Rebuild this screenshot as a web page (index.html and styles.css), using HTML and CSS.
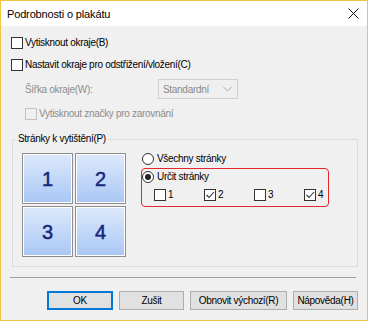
FILE: index.html
```html
<!DOCTYPE html>
<html lang="cs">
  <head>
    <meta charset="UTF-8" />
    <title>Podrobnosti o plakátu</title>
    <link rel="stylesheet" href="styles.css">
  </head>
  <body>
    <div class="window">
      <div class="titlebar">
        <span class="title">Podrobnosti o plakátu</span>
        <svg class="close" width="11" height="11" viewBox="0 0 11 11">
          <path d="M0.5 0.5 L10.5 10.5 M10.5 0.5 L0.5 10.5" stroke="#111" stroke-width="1" fill="none" />
        </svg>
      </div>

      <div class="content">
        <label class="check first"><span class="box"></span>Vytisknout okraje(B)</label>
        <label class="check second"><span class="box"></span>Nastavit okraje pro odstřižení/vložení(C)</label>

        <div class="width-row">
          <span class="width-label">Šířka okraje(W):</span>
          <div class="combo">
            <span>Standardní</span>
            <svg width="9" height="6" viewBox="0 0 9 6">
              <path d="M0.5 1 L4.5 5 L8.5 1" stroke="#a8a8a8" stroke-width="1" fill="none" />
            </svg>
          </div>
        </div>

        <label class="check disabled"><span class="box"></span>Vytisknout značky pro zarovnání</label>

        <fieldset class="group">
          <legend>Stránky k vytištění(P)</legend>
          <div class="group-body">
            <div class="tiles">
              <div class="tile">1</div>
              <div class="tile">2</div>
              <div class="tile">3</div>
              <div class="tile">4</div>
            </div>

            <div class="options">
              <label class="radio all"><span class="dot"></span>Všechny stránky</label>
              <div class="highlight">
                <label class="radio picked"><span class="dot on"></span>Určit stránky</label>
                <div class="pages">
                  <label class="check"><span class="box"></span>1</label>
                  <label class="check"><span class="box checked"></span>2</label>
                  <label class="check"><span class="box"></span>3</label>
                  <label class="check"><span class="box checked"></span>4</label>
                </div>
              </div>
            </div>
          </div>
        </fieldset>

        <div class="separator"></div>

        <div class="buttons">
          <button class="btn default">OK</button>
          <button class="btn">Zušit</button>
          <button class="btn wide">Obnovit výchozí(R)</button>
          <button class="btn">Nápověda(H)</button>
        </div>
      </div>
    </div>
  </body>
</html>
```

FILE: styles.css
```css
* {
  margin: 0;
  padding: 0;
  box-sizing: border-box;
}

body {
  font-family: "Liberation Sans", Arial, sans-serif;
  font-size: 10px;
  letter-spacing: -0.3px;
  color: #000;
  background: #fff;
}

.window {
  width: 368px;
  height: 321px;
  border: 1px solid #f1c544;
  display: flex;
  flex-direction: column;
  background: #f0f0f0;
}

.titlebar {
  height: 25px;
  background: #fff;
  display: flex;
  align-items: center;
  justify-content: space-between;
  padding: 0 8px 0 6px;
}

.title {
  font-size: 11px;
  letter-spacing: -0.15px;
}

.content {
  flex: 1;
  display: flex;
  flex-direction: column;
  padding: 11px 9px 0 10px;
}

/* checkboxes */

.check {
  display: flex;
  align-items: center;
  height: 12px;
  gap: 2px;
  line-height: 12px;
}

.box {
  width: 12px;
  height: 12px;
  border: 1px solid #333;
  background: #fff;
  flex: none;
}

.box.checked {
  background: #fff url("data:image/svg+xml,%3Csvg xmlns='http://www.w3.org/2000/svg' width='10' height='10'%3E%3Cpath d='M1.5 5 L4 7.5 L9 2' stroke='%23333' stroke-width='1.1' fill='none'/%3E%3C/svg%3E") center no-repeat;
}

.second {
  margin-top: 10px;
}

.width-row {
  display: flex;
  align-items: center;
  height: 20px;
  margin: 8px 0 0 14px;
  color: #8d8d8d;
}

.width-label {
  width: 133px;
}

.combo {
  width: 80px;
  height: 20px;
  border: 1px solid #cfcfcf;
  background: #efefef;
  display: flex;
  align-items: center;
  justify-content: space-between;
  padding: 0 5px 0 4px;
  color: #8a8a8a;
}

.disabled {
  margin: 9px 0 0 14px;
  color: #8d8d8d;
}

.disabled .box {
  border-color: #c2c2c2;
  background: #f0f0f0;
}

/* page group */

.group {
  margin: 13px 0 0 1px;
  width: 346px;
  height: 134px;
  border: 1px solid #dcdcdc;
  padding: 0;
}

.group legend {
  margin-left: 3px;
  padding: 0 2px;
  line-height: 12px;
}

.group-body {
  display: flex;
  padding: 8px 0 0 9px;
}

.tiles {
  display: grid;
  grid-template-columns: 51px 51px;
  grid-auto-rows: 51px;
  gap: 2px;
}

.tile {
  border: 1px solid #8e8e8e;
  box-shadow: inset 0 0 0 1px #fff;
  background: linear-gradient(#dde9fb, #a9c7f5);
  display: flex;
  align-items: center;
  justify-content: center;
  font-size: 20px;
  letter-spacing: 0;
  color: #16277a;
  -webkit-text-stroke: 0.5px #16277a;
  padding-top: 1px;
}

.options {
  margin-left: 15px;
}

.radio {
  display: flex;
  align-items: center;
  height: 12px;
  gap: 3px;
  line-height: 12px;
}

.radio.all {
  margin-left: 1px;
}

.dot {
  width: 12px;
  height: 12px;
  border-radius: 50%;
  border: 1px solid #333;
  background: #fff;
  flex: none;
  display: flex;
  align-items: center;
  justify-content: center;
}

.dot.on::after {
  content: "";
  width: 6px;
  height: 6px;
  border-radius: 50%;
  background: #222;
}

.highlight {
  margin-top: 3px;
  width: 188px;
  border: 1px solid #e5262c;
  border-radius: 4px;
  padding: 2px 0 5px 0;
}

.pages {
  display: grid;
  grid-template-columns: repeat(4, 50px);
  margin-top: 6px;
  padding-left: 12px;
}

/* footer */

.separator {
  margin: 10px 0 0 -1px;
  width: 346px;
  border-top: 1px solid #a0a0a0;
}

.buttons {
  display: flex;
  justify-content: flex-end;
  gap: 6px;
  margin-top: 13px;
}

.btn {
  width: 65px;
  height: 19px;
  border: 1px solid #adadad;
  background: #e1e1e1;
  font-family: inherit;
  font-size: 10px;
  letter-spacing: -0.3px;
  color: #000;
}

.btn.default {
  width: 66px;
  border-color: #0078d7;
  box-shadow: inset 0 0 0 1px #0078d7;
}

.btn.wide {
  width: 97px;
}
```
